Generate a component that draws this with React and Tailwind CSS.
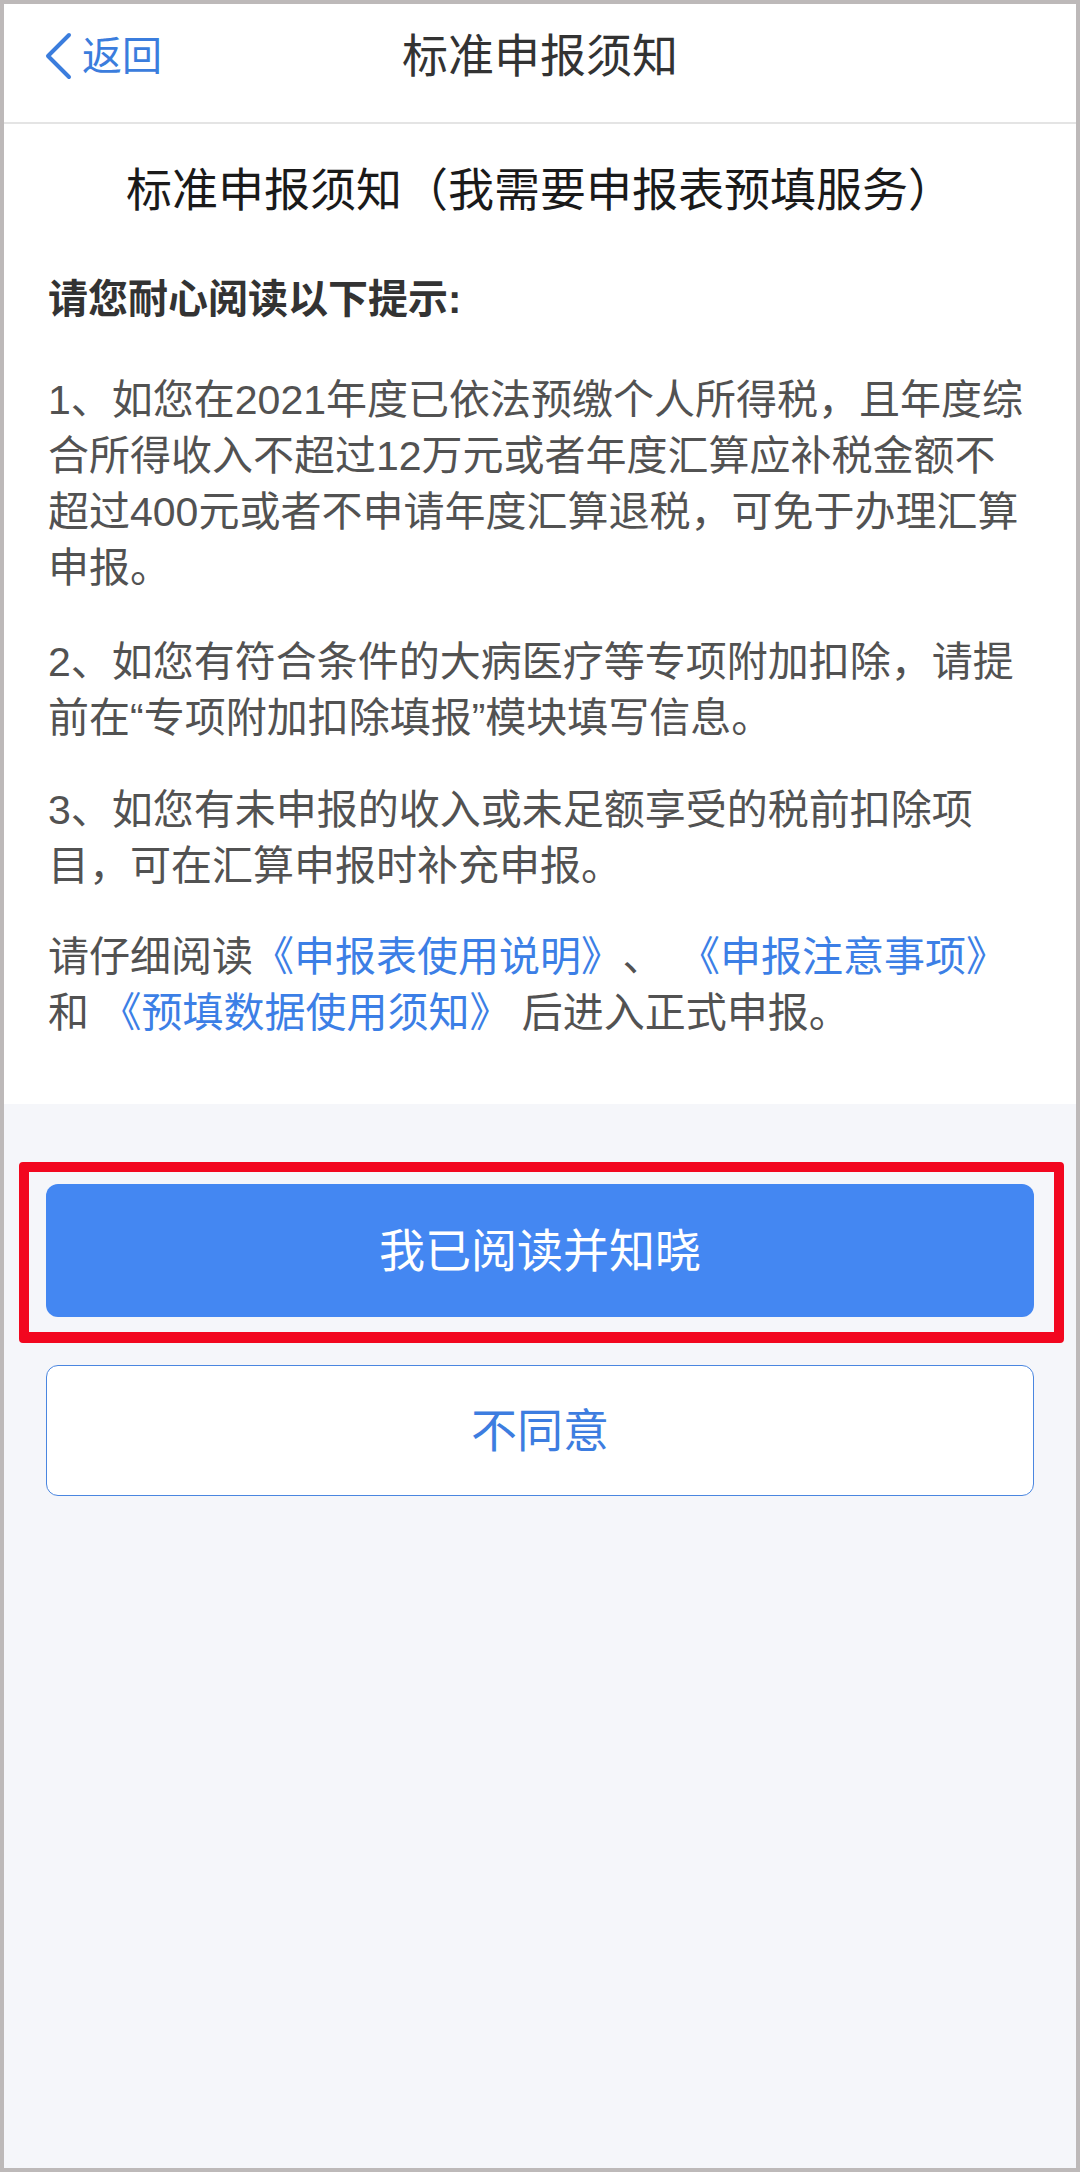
import React from "react";

const FONT = "font-['Liberation_Sans','Noto_Sans_CJK_SC',sans-serif]";

function Line({ children }) {
  return <span className="block whitespace-nowrap">{children}</span>;
}

function Link({ children, className = "" }) {
  return <span className={`text-[#3c7fe6] ${className}`}>{children}</span>;
}

export default function App() {
  return (
    <div className={`${FONT} w-[1080px] h-[2172px] bg-[#bdb9b9] p-[4px] flex flex-col`}>
      <div className="flex-1 flex flex-col bg-[#f5f6fa]">
        {/* Header */}
        <header className="h-[120px] bg-white border-b-2 border-[#e4e4e4]">
          <div className="h-[104px] grid grid-cols-[1fr_auto_1fr] items-center">
            <div className="flex items-center pl-[41px]">
              <svg width="28" height="48" viewBox="0 0 28 48" className="mr-[9px]">
                <polyline
                  points="24,3 3,24 24,45"
                  fill="none"
                  stroke="#3b7ddd"
                  strokeWidth="4"
                  strokeLinecap="round"
                  strokeLinejoin="round"
                />
              </svg>
              <span className="text-[40px] leading-none text-[#3b7ddd]">返回</span>
            </div>
            <div className="text-[46px] leading-none text-[#333333]">标准申报须知</div>
            <div />
          </div>
        </header>

        {/* Content */}
        <section className="bg-white pt-[36px] pb-[63px] px-[44px]">
          <h1 className="text-[46px] leading-[60px] text-[#1a1a1a] text-center">
            标准申报须知（我需要申报表预填服务）
          </h1>
          <p className="mt-[51px] text-[40px] leading-[56px] font-bold text-[#333333]">
            请您耐心阅读以下提示:
          </p>
          <div className="text-[41px] leading-[56px] text-[#525252]">
            <p className="mt-[45px]">
              <Line>1、如您在2021年度已依法预缴个人所得税，且年度综</Line>
              <Line>合所得收入不超过12万元或者年度汇算应补税金额不</Line>
              <Line>超过400元或者不申请年度汇算退税，可免于办理汇算</Line>
              <Line>申报。</Line>
            </p>
            <p className="mt-[38px]">
              <Line>2、如您有符合条件的大病医疗等专项附加扣除，请提</Line>
              <Line>前在“专项附加扣除填报”模块填写信息。</Line>
            </p>
            <p className="mt-[36px]">
              <Line>3、如您有未申报的收入或未足额享受的税前扣除项</Line>
              <Line>目，可在汇算申报时补充申报。</Line>
            </p>
            <p className="mt-[35px]">
              <Line>
                请仔细阅读<Link>《申报表使用说明》</Link>
                <span className="ml-[21px]">、</span>
                <Link className="ml-[36px]">《申报注意事项》</Link>
              </Line>
              <Line>
                和 <Link>《预填数据使用须知》</Link> 后进入正式申报。
              </Line>
            </p>
          </div>
        </section>

        {/* Buttons */}
        <div className="mt-[58px] ml-[15px] mr-[12px] border-[10px] border-b-[11px] border-[#f2071f] rounded-[4px] pt-[12px] pb-[15px] pl-[17px] pr-[20px]">
          <button className="w-full h-[133px] rounded-[12px] bg-[#4487f2] text-white text-[46px] leading-none">
            我已阅读并知晓
          </button>
        </div>
        <div className="mt-[22px] mx-[42px]">
          <button className="w-full h-[131px] rounded-[12px] bg-white border-[1.5px] border-[#4a86e0] text-[#3d7de0] text-[46px] leading-none">
            不同意
          </button>
        </div>
      </div>
    </div>
  );
}
